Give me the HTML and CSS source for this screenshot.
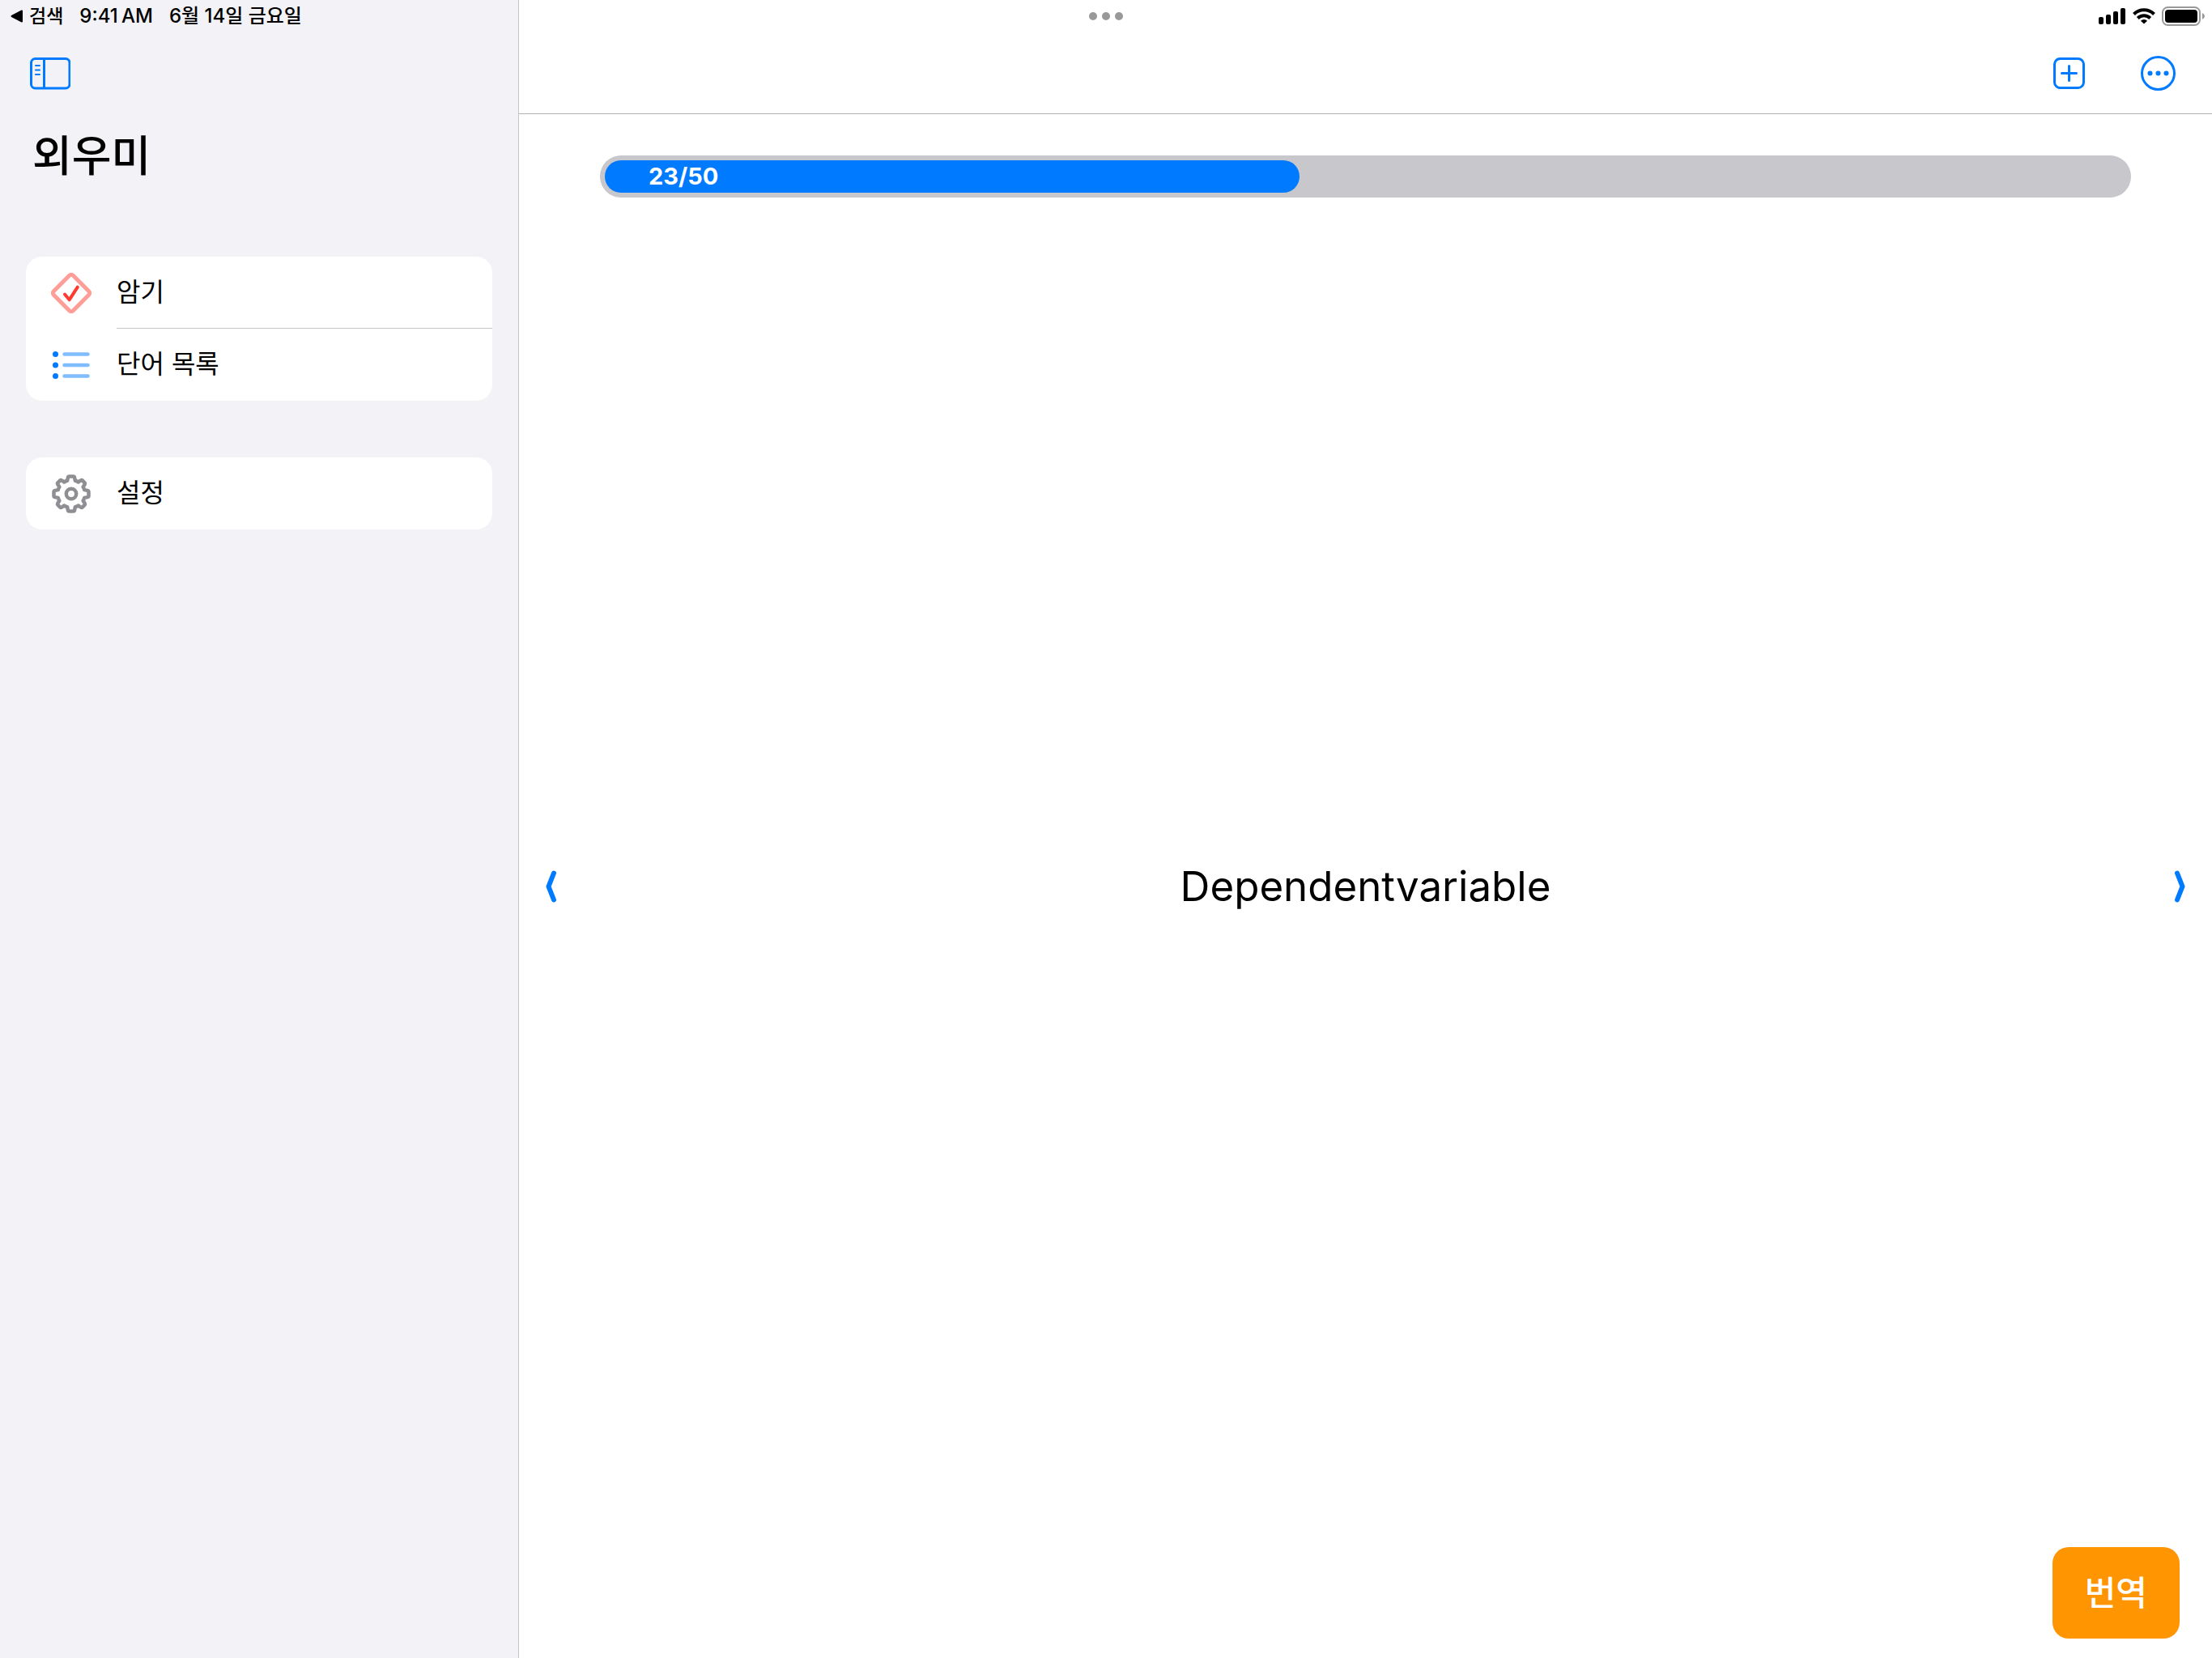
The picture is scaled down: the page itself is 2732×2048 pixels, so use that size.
FILE: index.html
```html
<!DOCTYPE html>
<html lang="ko">
<head>
<meta charset="utf-8">
<meta name="viewport" content="width=device-width, initial-scale=1">
<title>외우미</title>
<link rel="stylesheet" href="styles.css">
</head>
<body>
<div class="app">
  <aside class="sidebar">
    <button class="icon-button sidebar-toggle" type="button" aria-label="사이드바 가리기">
      <svg width="50" height="40" viewBox="0 0 50 40" fill="none" stroke="currentColor" stroke-width="3">
        <rect x="1.5" y="1.5" width="47.5" height="36.5" rx="5"/>
        <path d="M17.5 1.5V38"/>
        <path d="M7 10h5M7 15.500h5M7 21h5" stroke-width="2" stroke-linecap="round"/>
      </svg>
    </button>
    <h1 class="title">외우미</h1>
    <nav class="menu">
      <ul class="card">
        <li>
          <a class="row" href="#memorize">
            <svg class="row-icon" width="52" height="52" viewBox="0 0 52 52" fill="none" stroke="#ff3b30" stroke-linecap="round" stroke-linejoin="round">
              <path d="M23.700 4.300 4.300 23.700a3.250 3.250 0 0 0 0 4.600L23.700 47.700a3.250 3.250 0 0 0 4.600 0L47.700 28.300a3.250 3.250 0 0 0 0-4.600L28.300 4.300a3.250 3.250 0 0 0-4.600 0Z" stroke="#ff9d97" stroke-width="5"/>
              <path d="M18 27.500l5.600 6.800L33.800 18.700" stroke-width="4"/>
            </svg>
            <span class="row-label">암기</span>
          </a>
        </li>
        <li>
          <a class="row" href="#words">
            <svg class="row-icon" width="52" height="52" viewBox="0 0 52 52">
              <g fill="#007aff"><circle cx="6.500" cy="12.500" r="3.500"/><circle cx="6.500" cy="26" r="3.500"/><circle cx="6.500" cy="39.500" r="3.500"/></g>
              <path d="M17.500 12.500H46.500M17.500 26H46.500M17.500 39.500H46.500" stroke="#80bdff" stroke-width="4.500" stroke-linecap="round"/>
            </svg>
            <span class="row-label">단어 목록</span>
          </a>
        </li>
      </ul>
      <ul class="card">
        <li>
          <a class="row" href="#settings">
            <svg class="row-icon" width="52" height="52" viewBox="-26 -26 52 52" fill="none" stroke="#8e8e93" stroke-width="4.500" stroke-linejoin="round">
              <path d="M-2.500-21.500H2.500Q3.800-21.500 4.100-20L4.900-16.200Q7-15.800 8.600-14.500L11.900-16.600Q13-17.300 13.900-16.400L16.600-13.700Q17.400-12.800 16.700-11.700L14.600-8.500Q15.800-6.800 16.200-4.900L20-4.100Q21.500-3.800 21.500-2.500V2.500Q21.500 3.800 20 4.100L16.200 4.900Q15.800 6.800 14.600 8.500L16.700 11.700Q17.400 12.800 16.600 13.700L13.900 16.400Q13 17.300 11.900 16.600L8.600 14.500Q7 15.800 4.900 16.200L4.100 20Q3.800 21.500 2.500 21.500H-2.500Q-3.800 21.500-4.100 20L-4.900 16.200Q-7 15.800-8.600 14.500L-11.900 16.600Q-13 17.300-13.900 16.400L-16.600 13.700Q-17.400 12.800-16.700 11.700L-14.600 8.500Q-15.800 6.800-16.200 4.900L-20 4.100Q-21.500 3.800-21.500 2.500V-2.500Q-21.500-3.800-20-4.100L-16.200-4.900Q-15.800-6.800-14.600-8.500L-16.700-11.700Q-17.400-12.800-16.600-13.700L-13.900-16.400Q-13-17.300-11.900-16.600L-8.600-14.500Q-7-15.800-4.900-16.200L-4.100-20Q-3.800-21.500-2.500-21.500Z"/>
              <circle r="6.200"/>
            </svg>
            <span class="row-label">설정</span>
          </a>
        </li>
      </ul>
    </nav>
  </aside>

  <main class="main">
    <header class="toolbar">
      <button class="icon-button" type="button" aria-label="단어 추가">
        <svg width="44" height="44" viewBox="0 0 44 44" fill="none" stroke="currentColor" stroke-width="3" stroke-linecap="round">
          <rect x="3.500" y="3.500" width="36" height="36" rx="7"/>
          <path d="M21.500 12.500v18M12.500 21.500h18"/>
        </svg>
      </button>
      <button class="icon-button" type="button" aria-label="더 보기">
        <svg width="44" height="44" viewBox="0 0 44 44" fill="currentColor">
          <circle cx="21.500" cy="21.500" r="20" fill="none" stroke="currentColor" stroke-width="3"/>
          <circle cx="11.500" cy="21.500" r="3"/><circle cx="21.500" cy="21.500" r="3"/><circle cx="31.500" cy="21.500" r="3"/>
        </svg>
      </button>
    </header>
    <section class="study">
      <div class="progress" role="progressbar" aria-valuemin="0" aria-valuemax="50" aria-valuenow="23" aria-label="진행률">
        <div class="progress-share" style="width:46%"><div class="progress-fill">23/50</div></div>
      </div>
      <div class="word-row">
        <button class="icon-button" type="button" aria-label="이전 단어">
          <svg width="14" height="40" viewBox="0 0 14 40" fill="none" stroke="currentColor" stroke-width="6" stroke-linecap="round" stroke-linejoin="round"><path d="M10 3.500 3.500 20 10 36.500"/></svg>
        </button>
        <p class="word">Dependentvariable</p>
        <button class="icon-button" type="button" aria-label="다음 단어">
          <svg width="14" height="40" viewBox="0 0 14 40" fill="none" stroke="currentColor" stroke-width="6" stroke-linecap="round" stroke-linejoin="round"><path d="M4 3.500 10.500 20 4 36.500"/></svg>
        </button>
      </div>
      <button class="translate" type="button">번역</button>
    </section>
  </main>

  <div class="status">
    <div class="status-left">
      <a class="back" href="#search">
        <svg width="16" height="16" viewBox="0 0 16 16" fill="#000" stroke="#000" stroke-width="2" stroke-linejoin="round"><path d="M1.500 8 14 1.500v13Z"/></svg>
        <span>검색</span>
      </a>
      <span>9:41&#8201;AM</span>
      <span>6월 14일 금요일</span>
    </div>
    <button class="icon-button" type="button" aria-label="멀티태스킹">
      <svg width="42" height="10" viewBox="0 0 42 10" fill="#999"><circle cx="5" cy="5" r="5"/><circle cx="21" cy="5" r="5"/><circle cx="37" cy="5" r="5"/></svg>
    </button>
    <div class="status-right">
      <svg width="34" height="20" viewBox="0 0 34 20"><rect y="11" width="6" height="9" rx="2"/><rect x="9" y="8" width="6" height="12" rx="2"/><rect x="18" y="4" width="6" height="16" rx="2"/><rect x="27" width="6" height="20" rx="2"/></svg>
      <svg width="28" height="20" viewBox="0 0 28 20" fill="none" stroke="#000" stroke-width="4"><path d="M1.500 7.500a17.500 17.500 0 0 1 25 0M6.300 12.500a11 11 0 0 1 15.400 0"/><path d="M14 19.500 9.900 15.700a6 6 0 0 1 8.200 0Z" fill="#000" stroke="none"/></svg>
      <svg width="54" height="24" viewBox="0 0 54 24"><rect x="1" y="1" width="46" height="22" rx="6.500" fill="none" stroke="#999" stroke-width="2"/><rect x="4" y="4" width="40" height="16" rx="4"/><path d="M50 8q3 1.300 3 4t-3 4Z" fill="#999"/></svg>
    </div>
  </div>
</div>
</body>
</html>
```
FILE: styles.css
```css
* { box-sizing: border-box; }

body {
  margin: 0;
  background: #fff;
  color: #000;
  font-family: Inter, "Noto Sans CJK KR", sans-serif;
}

h1, p, ul { margin: 0; padding: 0; }
ul { list-style: none; }
a { color: inherit; text-decoration: none; }
svg { display: block; }
button { font: inherit; border: 0; cursor: pointer; }

.icon-button {
  padding: 0;
  background: none;
  color: #007aff;
}

/* The status bar shares the first row with both columns */
.app {
  display: grid;
  grid-template-columns: 641px 1fr;
  grid-template-rows: 40px 1fr;
  min-height: 100vh;
}

.status {
  grid-area: 1 / 1 / 2 / -1;
  display: grid;
  grid-template-columns: 1fr auto 1fr;
  align-items: center;
  padding: 0 8px;
  font-size: 24px;
  font-weight: 500;
  line-height: 40px;
}
.status-left { display: flex; gap: 20px; padding-left: 5px; }
.back { display: flex; align-items: center; gap: 7px; font-size: 23px; }
.status-right { display: flex; align-items: center; justify-content: flex-end; gap: 8px; }

.sidebar {
  grid-area: 1 / 1 / -1 / 2;
  background: #f2f2f7;
  border-right: 1px solid #c6c6c8;
  padding: 71px 32px 32px;
}
.sidebar-toggle { margin-left: 5px; }
.title {
  margin: 38px 8px 84px;
  font-size: 53px;
  line-height: 80px;
  font-weight: 500;
}
.menu { display: grid; gap: 70px; }
.card { background: #fff; border-radius: 20px; }
.row {
  display: flex;
  align-items: center;
  gap: 30px;
  height: 89px;
  padding-left: 30px;
  font-size: 32px;
}
.row-label {
  flex: 1;
  line-height: 88px;
  border-bottom: 1px solid transparent;
}
li:not(:last-child) .row-label { border-color: #c6c6c8; }

.main {
  grid-area: 1 / 2 / -1 / 3;
  display: grid;
  grid-template-rows: auto 1fr;
}
.toolbar {
  display: flex;
  justify-content: flex-end;
  gap: 66px;
  padding: 69px 44px 27px;
  border-bottom: 1px solid #b2b2b2;
}

.study {
  display: grid;
  grid-template-rows: 1fr auto 1fr;
}
.progress {
  align-self: start;
  margin: 51px 100px 0;
  border-radius: 26px;
  background: #c7c7cc;
}
.progress-share { padding: 6px; }
.progress-fill {
  border-radius: 20px;
  padding-left: 54px;
  background: #007aff;
  color: #fff;
  font-size: 29px;
  line-height: 40px;
  font-weight: 700;
}
.word-row {
  display: flex;
  align-items: center;
  justify-content: space-between;
  padding: 0 33px;
}
.word { font-size: 51px; line-height: 64px; }
.translate {
  align-self: end;
  justify-self: end;
  margin: 0 40px 24px 0;
  padding: 26px 40px;
  border-radius: 20px;
  background: #ff9500;
  color: #fff;
  font-size: 42px;
  line-height: 61px;
  font-weight: 500;
}
```
